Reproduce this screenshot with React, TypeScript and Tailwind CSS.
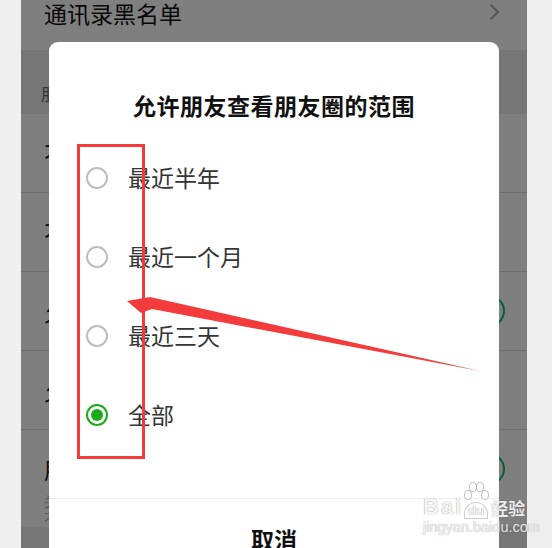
const FONT = "font-['Noto_Sans_CJK_SC','Noto_Sans',sans-serif]";

const OPTIONS = [
  { label: '最近半年', checked: false },
  { label: '最近一个月', checked: false },
  { label: '最近三天', checked: false },
  { label: '全部', checked: true },
];

const ROWS = [
  { label: '不让他(她)看', kind: 'link' },
  { label: '不看他(她)', kind: 'link' },
  { label: '允许陌生人查看十条朋友圈', kind: 'toggle' },
  { label: '允许朋友查看朋友圈的范围', kind: 'link' },
];

const Chevron = () => (
  <svg width="11" height="18" viewBox="0 0 11 18" className="shrink-0">
    <path d="M1.5 1.5 L9 9 L1.5 16.5" fill="none" stroke="#aaaaaa" strokeWidth="2" />
  </svg>
);

const Toggle = () => (
  <div className="w-[52px] h-[32px] rounded-full bg-[#07c160] flex items-center justify-end pr-[2px]">
    <div className="w-[28px] h-[28px] rounded-full bg-white" />
  </div>
);

const Radio = ({ checked }: { checked: boolean }) =>
  checked ? (
    <div className="w-[22px] h-[22px] rounded-full border-2 border-[#1aad19] flex items-center justify-center">
      <div className="w-[12px] h-[12px] rounded-full bg-[#1aad19]" />
    </div>
  ) : (
    <div className="w-[22px] h-[22px] rounded-full border-2 border-[#bdbdbd]" />
  );

const App = () => {
  return (
    <div className={`relative w-[552px] h-[548px] bg-[#efefef] overflow-hidden ${FONT}`}>
      {/* Phone screen */}
      <div className="relative ml-[21px] w-[506px] h-full bg-[#ededed] overflow-hidden">
        <div className="h-[50px] bg-white flex items-start justify-between pl-[23px] pr-[27px]">
          <span className="text-[23px] leading-[27px] text-[#111]">通讯录黑名单</span>
          <div className="pt-[3px]">
            <Chevron />
          </div>
        </div>

        <div className="h-[64px] flex items-end pb-[8px] pl-[20px]">
          <span className="text-[17px] leading-[24px] text-[#666]">朋友圈</span>
        </div>

        {ROWS.map((row) => (
          <div
            key={row.label}
            className="h-[79px] bg-white border-b border-[#dcdcdc] flex items-center justify-between pl-[23px] pr-[22px]"
          >
            <span className="text-[23px] text-[#111]">{row.label}</span>
            {row.kind === 'toggle' ? (
              <Toggle />
            ) : (
              <div className="pr-[5px]">
                <Chevron />
              </div>
            )}
          </div>
        ))}

        <div className="bg-white pl-[23px] pr-[22px] pt-[22px]">
          <div className="flex items-center justify-between">
            <span className="text-[23px] text-[#111]">朋友圈更新提醒</span>
            <Toggle />
          </div>
          <p className="mt-[6px] text-[14px] leading-[17px] text-[#b2b2b2] w-[380px]">
            关闭后，有朋友更新照片时，界面下方的“发现”切换按钮上不再出现红点提示。
          </p>
        </div>

        {/* Dim mask */}
        <div className="absolute inset-0 bg-black/50" />

        {/* Dialog */}
        <div className="absolute left-[28px] top-[42px] w-[450px] bg-white rounded-[9px]">
          <h2 className="pt-[47px] text-center text-[23px] leading-[32px] font-bold tracking-[0.5px] text-[#111]">
            允许朋友查看朋友圈的范围
          </h2>
          <div className="mt-[17px] pb-[44px]">
            {OPTIONS.map((opt) => (
              <div key={opt.label} className="h-[79px] flex items-center pl-[37px] gap-[20px]">
                <Radio checked={opt.checked} />
                <span className="text-[23px] text-[#353535]">{opt.label}</span>
              </div>
            ))}
          </div>
          <div className="border-t border-[#eeeeee] h-[82px] flex items-center justify-center">
            <span className="text-[23px] font-bold text-[#111]">取消</span>
          </div>
        </div>
      </div>

      {/* Red annotation box */}
      <div className="absolute left-[77px] top-[144px] w-[68px] h-[315px] border-[3px] border-[#f33b3b]" />

      {/* Red arrow */}
      <svg className="absolute left-0 top-0" width="552" height="548" viewBox="0 0 552 548">
        <polygon points="127,301 150,297 480,371 152,309 141,313" fill="#f33b3b" />
      </svg>

      {/* Watermark */}
      <div className="absolute left-[423px] top-[481px] flex flex-col items-start text-white/90 font-['Liberation_Sans',sans-serif] [text-shadow:0_0_1px_rgba(0,0,0,0.5)]">
        <div className="flex items-end h-[38px]">
          <span className="text-[22px] leading-[24px] font-bold tracking-[2px]">Bai</span>
          <div className="relative w-[26px] h-[38px] flex items-end justify-center">
            <svg className="absolute left-0 top-0" width="26" height="22" viewBox="0 0 26 22">
              <ellipse cx="5" cy="14" rx="3.5" ry="4.5" fill="#ffffff" stroke="rgba(0,0,0,0.25)" strokeWidth="1" />
              <ellipse cx="10" cy="6" rx="3.5" ry="4.5" fill="#ffffff" stroke="rgba(0,0,0,0.25)" strokeWidth="1" />
              <ellipse cx="17" cy="6" rx="3.5" ry="4.5" fill="#ffffff" stroke="rgba(0,0,0,0.25)" strokeWidth="1" />
              <ellipse cx="22" cy="14" rx="3.5" ry="4.5" fill="#ffffff" stroke="rgba(0,0,0,0.25)" strokeWidth="1" />
            </svg>
            <span className="rounded-t-full border border-black/20 bg-white/60 px-[3px] text-[13px] leading-[15px] font-bold">du</span>
          </div>
          <span className={`text-[17px] leading-[22px] font-bold ml-[2px] ${FONT}`}>经验</span>
        </div>
        <span className="text-[14.5px] leading-[15px] mt-[1px]">jingyan.baidu.com</span>
      </div>
    </div>
  );
};

export default App;
